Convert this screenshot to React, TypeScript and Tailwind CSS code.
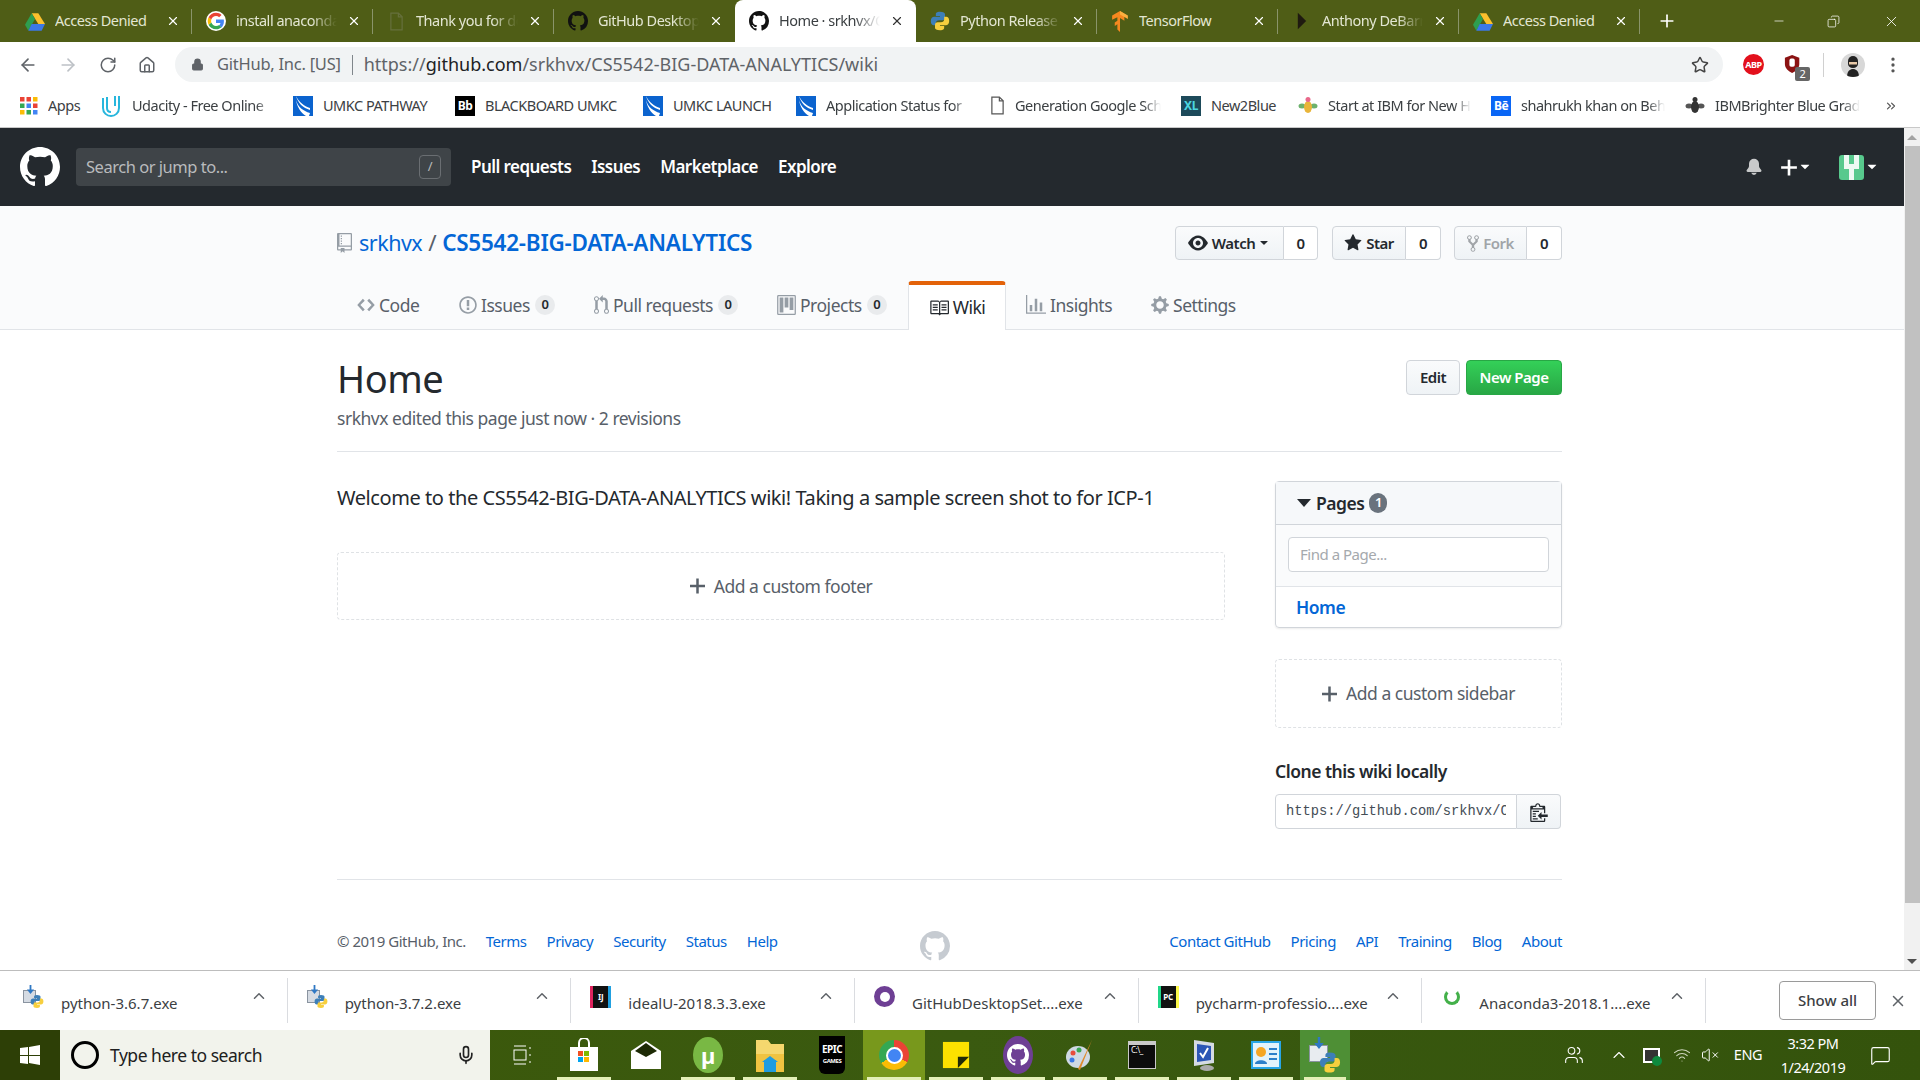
import React from "react";
import { GoStarFill, GoBellFill, GoTriangleDown } from "react-icons/go";
import { ArrowLeft, ArrowRight, RotateCw, Home, Lock, Star, X, Plus, Minus, ChevronUp, Mic, MoreVertical, Copy, MessageSquare, Wifi, VolumeX, Users, ChevronsRight } from "lucide-react";

const O = ({ vb, d, s }: { vb: string; d: string; s: string }) => (
  <svg viewBox={vb} className={`${s} shrink-0`} fill="currentColor" fillRule="evenodd"><path d={d} /></svg>
);
const ghPath = "M8 0C3.58 0 0 3.58 0 8c0 3.54 2.29 6.53 5.47 7.59.4.07.55-.17.55-.38 0-.19-.01-.82-.01-1.49-2.01.37-2.53-.49-2.69-.94-.09-.23-.48-.94-.82-1.13-.28-.15-.68-.52-.01-.53.63-.01 1.08.58 1.23.82.72 1.21 1.87.87 2.33.66.07-.52.28-.87.51-1.07-1.78-.2-3.64-.89-3.64-3.95 0-.87.31-1.59.82-2.15-.08-.2-.36-1.02.08-2.12 0 0 .67-.21 2.2.82.64-.18 1.32-.27 2-.27.68 0 1.36.09 2 .27 1.53-1.04 2.2-.82 2.2-.82.44 1.1.16 1.92.08 2.12.51.56.82 1.27.82 2.15 0 3.07-1.87 3.75-3.65 3.95.29.25.54.73.54 1.48 0 1.07-.01 1.93-.01 2.2 0 .21.15.46.55.38A8.013 8.013 0 0 0 16 8c0-4.42-3.58-8-8-8z";
const Mark = ({ c = "text-white", s = "w-5 h-5" }: { c?: string; s?: string }) => <O vb="0 0 16 16" d={ghPath} s={`${s} ${c}`} />;
const IcRepo = ({ s }: { s: string }) => <O vb="0 0 12 16" s={s} d="M4 9H3V8h1v1zm0-3H3v1h1V6zm0-2H3v1h1V4zm0-2H3v1h1V2zm8-1v12c0 .55-.45 1-1 1H6v2l-1.5-1.5L3 16v-2H1c-.55 0-1-.45-1-1V1c0-.55.45-1 1-1h10c.55 0 1 .45 1 1zm-1 10H1v2h2v-1h3v1h5v-2zm0-10H2v9h9V1z" />;
const IcCode = ({ s }: { s: string }) => <O vb="0 0 14 16" s={s} d="M9.5 3L8 4.5 11.5 8 8 11.5 9.5 13 14 8 9.5 3zm-5 0L0 8l4.5 5L6 11.5 2.5 8 6 4.5 4.5 3z" />;
const IcIssue = ({ s }: { s: string }) => <O vb="0 0 14 16" s={s} d="M7 2.3c3.14 0 5.7 2.56 5.7 5.7s-2.56 5.7-5.7 5.7A5.71 5.71 0 0 1 1.3 8c0-3.14 2.56-5.7 5.7-5.7zM7 1C3.14 1 0 4.14 0 8s3.14 7 7 7 7-3.14 7-7-3.14-7-7-7zm1 3H6v5h2V4zm0 6H6v2h2v-2z" />;
const IcPull = ({ s }: { s: string }) => <O vb="0 0 12 16" s={s} d="M11 11.28V5c-.03-.78-.34-1.47-.94-2.06C9.46 2.35 8.78 2.03 8 2H7V0L4 3l3 3V4h1c.27.02.48.11.69.31.21.2.3.42.31.69v6.28A1.993 1.993 0 0 0 10 15a1.993 1.993 0 0 0 1-3.72zm-1 2.92c-.66 0-1.2-.55-1.2-1.2 0-.65.55-1.2 1.2-1.2.65 0 1.2.55 1.2 1.2 0 .65-.55 1.2-1.2 1.2zM4 3c0-1.11-.89-2-2-2a1.993 1.993 0 0 0-1 3.72v6.56A1.993 1.993 0 0 0 2 15a1.993 1.993 0 0 0 1-3.72V4.72c.59-.34 1-.98 1-1.72zm-.8 10c0 .66-.55 1.2-1.2 1.2-.65 0-1.2-.55-1.2-1.2 0-.65.55-1.2 1.2-1.2.65 0 1.2.55 1.2 1.2zM2 4.2C1.34 4.2.8 3.65.8 3c0-.65.55-1.2 1.2-1.2.65 0 1.2.55 1.2 1.2 0 .65-.55 1.2-1.2 1.2z" />;
const IcProject = ({ s }: { s: string }) => <O vb="0 0 15 16" s={s} d="M10 12h3V2h-3v10zm-4-2h3V2H6v8zm-4 4h3V2H2v12zm-1 1h13V1H1v14zM14 0H1a1 1 0 0 0-1 1v14a1 1 0 0 0 1 1h13a1 1 0 0 0 1-1V1a1 1 0 0 0-1-1z" />;
const IcBook = ({ s }: { s: string }) => <O vb="0 0 16 16" s={s} d="M3 5h4v1H3V5zm0 3h4V7H3v1zm0 2h4V9H3v1zm11-5h-4v1h4V5zm0 2h-4v1h4V7zm0 2h-4v1h4V9zm2-6v9c0 .55-.45 1-1 1H9.5l-1 1-1-1H2c-.55 0-1-.45-1-1V3c0-.55.45-1 1-1h5.5l1 1 1-1H15c.55 0 1 .45 1 1zm-8 .5L7.5 3H2v9h6V3.5zm7-.5H9.5l-.5.5V12h6V3z" />;
const IcGraph = ({ s }: { s: string }) => <O vb="0 0 16 16" s={s} d="M16 14v1H0V0h1v14h15zM5 13H3V8h2v5zm4 0H7V3h2v10zm4 0h-2V6h2v7z" />;
const IcGear = ({ s }: { s: string }) => <O vb="0 0 14 16" s={s} d="M14 8.77v-1.6l-1.94-.64-.45-1.09.88-1.84-1.13-1.13-1.81.91-1.09-.45-.69-1.92h-1.6l-.63 1.94-1.11.45-1.84-.88-1.13 1.13.91 1.81-.45 1.09L0 7.23v1.59l1.94.64.45 1.09-.88 1.84 1.13 1.13 1.81-.91 1.09.45.69 1.92h1.59l.63-1.94 1.11-.45 1.84.88 1.13-1.13-.92-1.81.47-1.09L14 8.75v.02zM7 11c-1.66 0-3-1.34-3-3s1.34-3 3-3 3 1.34 3 3-1.34 3-3 3z" />;
const IcFork = ({ s }: { s: string }) => <O vb="0 0 10 16" s={s} d="M8 1a1.993 1.993 0 0 0-1 3.72V6L5 8 3 6V4.72A1.993 1.993 0 0 0 2 1a1.993 1.993 0 0 0-1 3.72V6.5l3 3v1.78A1.993 1.993 0 0 0 5 15a1.993 1.993 0 0 0 1-3.72V9.5l3-3V4.72A1.993 1.993 0 0 0 8 1zM2 4.2C1.34 4.2.8 3.65.8 3c0-.65.55-1.2 1.2-1.2.65 0 1.2.55 1.2 1.2 0 .65-.55 1.2-1.2 1.2zm3 10c-.66 0-1.2-.55-1.2-1.2 0-.65.55-1.2 1.2-1.2.65 0 1.2.55 1.2 1.2 0 .65-.55 1.2-1.2 1.2zm3-10c-.66 0-1.2-.55-1.2-1.2 0-.65.55-1.2 1.2-1.2.65 0 1.2.55 1.2 1.2 0 .65-.55 1.2-1.2 1.2z" />;
const IcEye = ({ s }: { s: string }) => <O vb="0 0 16 16" s={s} d="M8.06 2C3 2 0 8 0 8s3 6 8.06 6C13 14 16 8 16 8s-3-6-7.94-6zM8 12c-2.2 0-4-1.78-4-4 0-2.2 1.8-4 4-4 2.22 0 4 1.8 4 4 0 2.22-1.78 4-4 4zm2-4c0 1.11-.89 2-2 2-1.11 0-2-.89-2-2 0-1.11.89-2 2-2 1.11 0 2 .89 2 2z" />;
const IcClip = ({ s }: { s: string }) => <O vb="0 0 14 16" s={s} d="M2 13h4v1H2v-1zm5-6H2v1h5V7zm2 3V8l-3 3 3 3v-2h5v-2H9zM4.5 9H2v1h2.5V9zM2 12h2.5v-1H2v1zm9 1h1v2c-.02.28-.11.52-.3.7-.19.18-.42.28-.7.3H1c-.55 0-1-.45-1-1V4c0-.55.45-1 1-1h3c0-1.11.89-2 2-2 1.11 0 2 .89 2 2h3c.55 0 1 .45 1 1v5h-1V6H1v9h10v-2zM2 5h8c0-.55-.45-1-1-1H8c-.55 0-1-.45-1-1s-.45-1-1-1-1 .45-1 1-.45 1-1 1H3c-.55 0-1 .45-1 1z" />;
const IcPlus = ({ s }: { s: string }) => <O vb="0 0 12 16" s={s} d="M12 9H7v5H5V9H0V7h5V2h2v5h5v2z" />;

const Drive = () => (
  <svg viewBox="0 0 24 22" className="w-5 h-[19px] shrink-0">
    <path d="M8 1h8l8 13h-8z" fill="#fbc02d" />
    <path d="M8 1L0 15l4 7 8-14z" fill="#2e9e4f" />
    <path d="M4 22h16l4-8H8z" fill="#3b78e7" />
  </svg>
);
const Google = () => (
  <svg viewBox="0 0 48 48" className="w-5 h-5 shrink-0">
    <circle cx="24" cy="24" r="24" fill="#fff" />
    <path d="M43 24.5c0-1.4-.1-2.7-.4-4H24v8h10.8c-.5 2.5-1.9 4.6-4 6l6.4 5c3.7-3.5 5.8-8.6 5.8-15z" fill="#4285f4" />
    <path d="M24 44c5.4 0 9.9-1.8 13.2-4.9l-6.4-5c-1.8 1.2-4 1.9-6.8 1.9-5.2 0-9.6-3.5-11.2-8.2l-6.6 5.1C9.5 39.5 16.2 44 24 44z" fill="#34a853" />
    <path d="M12.8 27.8c-.8-2.4-.8-5.1 0-7.6l-6.6-5.1c-2.8 5.6-2.8 12.2 0 17.8z" fill="#fbbc05" />
    <path d="M24 12c2.9 0 5.6 1 7.6 3l5.7-5.7C33.9 6 29.4 4 24 4 16.2 4 9.5 8.5 6.2 15.1l6.6 5.1C14.4 15.5 18.8 12 24 12z" fill="#ea4335" />
  </svg>
);
const Doc = ({ c = "#66703c" }: { c?: string }) => (
  <svg viewBox="0 0 16 20" className="w-[15px] h-[19px] shrink-0" fill="none" stroke={c} strokeWidth="1.3">
    <path d="M2 1h8l4 4v14H2z" /><path d="M10 1v4h4" />
  </svg>
);
const Py = ({ s = "w-5 h-5" }: { s?: string }) => (
  <svg viewBox="0 0 24 24" className={`${s} shrink-0`}>
    <path d="M12 1c-4 0-5 1.5-5 3v2h5v1H5c-2 0-4 1.5-4 5s1.5 5 3.5 5H7v-2.5C7 12.5 8.5 11 11 11h4c1.5 0 3-1 3-3V4c0-1.5-2-3-6-3z" fill="#3d7fb8" />
    <path d="M12 23c4 0 5-1.5 5-3v-2h-5v-1h7c2 0 4-1.5 4-5s-1.5-5-3.5-5H17v2.5c0 2.5-1.5 4-4 4H9c-1.5 0-3 1-3 3v4c0 1.5 2 2.5 6 2.5z" fill="#f7cf3e" />
  </svg>
);
const DlPy = () => (
  <span className="relative block w-[21px] h-[24px]">
    <span className="absolute left-0 top-[5px] w-[13px] h-[13px] bg-[#d5dbe3] border border-[#8a94a0]" />
    <svg viewBox="0 0 10 10" className="absolute left-[3px] top-0 w-[9px] h-[9px]"><path d="M4 0h2v5h3L5 10 1 5h3z" fill="#2f78c4" /></svg>
    <span className="absolute left-[7px] top-[9px]"><Py s="w-[14px] h-[15px]" /></span>
  </span>
);
const BarPy = () => (
  <span className="relative block w-[32px] h-[38px]">
    <span className="absolute left-0 top-[9px] w-[19px] h-[17px] bg-[#e8ecf0] border border-[#8a94a0]" />
    <svg viewBox="0 0 10 10" className="absolute left-[4px] top-0 w-[12px] h-[14px]"><path d="M4 0h2v5h3L5 10 1 5h3z" fill="#2f78c4" /></svg>
    <span className="absolute left-[10px] top-[15px]"><Py s="w-[22px] h-[23px]" /></span>
  </span>
);
const Tf = () => (
  <svg viewBox="0 0 20 24" className="w-[18px] h-[21px] shrink-0">
    <path d="M10 0L1 5v5l6-3v4l-3 2v4l3-2v6l3 3V8l5 3V6l3 1V5z" fill="#f6881f" />
    <path d="M10 0l9 5v4l-9-5z" fill="#fbb040" />
  </svg>
);
const Dark = () => <svg viewBox="0 0 12 20" className="w-[10px] h-[20px] ml-[5px] mr-[5px] shrink-0"><path d="M1 0l10 10-10 10z" fill="#1f1a10" /></svg>;

const tabs = [
  { t: "Access Denied", i: <Drive /> },
  { t: "install anaconda", i: <Google />, f: true },
  { t: "Thank you for downloading", i: <span className="px-[2px] flex"><Doc /></span>, f: true },
  { t: "GitHub Desktop", i: <Mark c="text-[#111]" />, f: true },
  { t: "Home · srkhvx/CS5542", i: <Mark c="text-[#111]" />, a: true, f: true },
  { t: "Python Release", i: <Py />, f: true },
  { t: "TensorFlow", i: <Tf /> },
  { t: "Anthony DeBarros", i: <Dark />, f: true },
  { t: "Access Denied", i: <Drive /> },
];

const UmkcIcon = () => (
  <svg viewBox="0 0 20 20" className="w-5 h-5 shrink-0">
    <rect width="20" height="20" fill="#0b63ce" />
    <path d="M3 4c2 7 7 11 14 13l-1 3H13C8 17 4 11 3 4zM3 0c3 6 8 10 14 12v2C10 12 5 7 3 0z" fill="#fff" />
  </svg>
);
const Bee = ({ c = false }: { c?: boolean }) => (
  <svg viewBox="0 0 20 20" className="w-5 h-5 shrink-0">
    <ellipse cx="4" cy="10" rx="3.5" ry="2.5" fill={c ? "#6db26d" : "#555"} />
    <ellipse cx="16" cy="10" rx="3.5" ry="2.5" fill={c ? "#6db26d" : "#555"} />
    <ellipse cx="10" cy="11" rx="4" ry="6" fill={c ? "#e9b53a" : "#333"} />
    <circle cx="10" cy="3.5" r="2.5" fill={c ? "#e9688a" : "#333"} />
  </svg>
);

const bookmarks = [
  { i: <svg viewBox="0 0 18 18" className="w-[18px] h-[18px] shrink-0">{[0, 6.5, 13].flatMap((y, r) => [0, 6.5, 13].map((x, k) => <rect key={`${r}${k}`} x={x} y={y} width="4.5" height="4.5" fill={[["#ea4335", "#ea4335", "#fbbc05"], ["#34a853", "#4285f4", "#ea4335"], ["#fbbc05", "#34a853", "#4285f4"]][r][k]} />))}</svg>, t: "Apps", w: "w-[34px] mr-[-2px]" },
  { i: <svg viewBox="0 0 20 22" className="w-[22px] h-[22px] shrink-0" fill="none" stroke="#27b6dd" strokeWidth="2"><path d="M2 3v10c0 5 4 8 8 8s8-3 8-8V1M6 2v11c0 3 2 4 4 4M14 1v10" /></svg>, t: "Udacity - Free Online", w: "w-[141px]", f: true },
  { i: <UmkcIcon />, t: "UMKC PATHWAY", w: "w-[112px]" },
  { i: <span className="w-5 h-5 bg-black text-white text-[12px] font-bold flex items-center justify-center shrink-0">Bb</span>, t: "BLACKBOARD UMKC", w: "w-[138px]" },
  { i: <UmkcIcon />, t: "UMKC LAUNCH", w: "w-[103px]" },
  { i: <UmkcIcon />, t: "Application Status for", w: "w-[144px]", f: true },
  { i: <Doc c="#555" />, t: "Generation Google Scholarship", w: "w-[146px]", f: true },
  { i: <span className="w-5 h-5 bg-[#1d4a5a] text-[#4cd6e0] text-[12px] font-bold flex items-center justify-center shrink-0">XL</span>, t: "New2Blue", w: "w-[67px]" },
  { i: <Bee c />, t: "Start at IBM for New Hires", w: "w-[143px]", f: true },
  { i: <span className="w-5 h-5 bg-[#0a66f5] text-white text-[12px] font-bold flex items-center justify-center shrink-0">Bē</span>, t: "shahrukh khan on Behance", w: "w-[144px]", f: true },
  { i: <Bee />, t: "IBMBrighter Blue Grad", w: "w-[145px]", f: true },
];

const Chrome = () => (
  <div className="flex flex-col shrink-0">
    <div className="h-[42px] bg-[#4f5d16] flex items-stretch pl-[11px]">
      {tabs.map((t, i) => {
        const nextActive = tabs[i + 1]?.a;
        return (
          <div key={i} className={`w-[181px] shrink-0 flex items-center pl-[14px] pr-[12px] gap-[10px] text-[14.5px] relative ${t.a ? "bg-white text-[#3c4043] rounded-t-[8px]" : "text-[#e3e6d2]"}`}>
            {t.i}
            <span className={`flex-1 overflow-hidden whitespace-nowrap ${t.f ? "[mask-image:linear-gradient(to_right,black_75%,transparent)]" : ""}`}>{t.t}</span>
            <X className={`w-[14px] h-[14px] shrink-0 ${t.a ? "text-[#333]" : "text-white"}`} />
            {!t.a && !nextActive && <span className="absolute right-0 top-[9px] h-[25px] w-px bg-[#8a946a]" />}
          </div>
        );
      })}
      <Plus className="w-[20px] h-[20px] text-white self-center ml-[17px]" />
      <div className="ml-auto flex items-center text-white">
        <Minus className="w-[14px] h-[14px] mr-[41px]" strokeWidth={1.2} />
        <Copy className="w-[13px] h-[15px] mr-[43px] -scale-x-100" strokeWidth={1.4} />
        <X className="w-[17px] h-[17px] mr-[20px]" strokeWidth={1.2} />
      </div>
    </div>
    <div className="h-[43px] bg-white flex items-center pl-[18px] pr-[2px] pt-[2px]">
      <ArrowLeft className="w-5 h-5 text-[#5f6368]" />
      <ArrowRight className="w-5 h-5 text-[#bdc1c6] ml-[20px]" />
      <RotateCw className="w-[18px] h-[18px] text-[#5f6368] ml-[21px]" />
      <Home className="w-[18px] h-[18px] text-[#5f6368] ml-[21px]" />
      <div className="ml-[19px] w-[1548px] h-[35px] rounded-full bg-[#f1f3f4] flex items-center pl-[16px] pr-[14px] text-[16.5px] text-[#5f6368] whitespace-nowrap tracking-[-0.25px]">
        <Lock className="w-[13px] h-[13px] fill-[#5f6368] mr-[13px]" />
        <span>GitHub, Inc. [US]</span>
        <span className="w-px h-[20px] bg-[#80868b] mx-[11px]" />
        <span className="text-[18px] tracking-normal">https://<span className="text-[#202124]">github.com</span>/srkhvx/CS5542-BIG-DATA-ANALYTICS/wiki</span>
        <Star className="w-[18px] h-[18px] ml-auto text-[#444]" />
      </div>
      <div className="ml-[20px] w-[21px] h-[21px] rounded-full bg-[#e3101c] text-white text-[9px] font-bold flex items-center justify-center">ABP</div>
      <div className="ml-[20px] relative w-[20px] h-[22px]">
        <svg viewBox="0 0 20 22" className="w-[18px] h-[20px]"><path d="M9 1l8 3v7c0 5-4 8-8 10-4-2-8-5-8-10V4z" fill="#8b1212" /><rect x="6" y="5" width="6" height="9" rx="2" fill="#fff" /></svg>
        <span className="absolute left-[11px] top-[13px] w-[15px] h-[14px] bg-[#666] rounded-[2px] text-white text-[11px] leading-[14px] text-center">2</span>
      </div>
      <span className="ml-[19px] w-px h-[24px] bg-[#d0d0d0]" />
      <div className="ml-[17px] w-[24px] h-[24px] rounded-full bg-[#d8d8d8] flex items-center justify-center overflow-hidden">
        <svg viewBox="0 0 24 24" className="w-[24px] h-[24px]"><path d="M7 8a5 5 0 0 1 10 0v3c0 2-2 4-5 4s-5-2-5-4z" fill="#222" /><rect x="8" y="9" width="8" height="2.5" fill="#e8c9a8" /><path d="M6 24c0-6 3-8 6-8s6 2 6 8z" fill="#222" /></svg>
      </div>
      <MoreVertical className="ml-[18px] w-[20px] h-[20px] text-[#555]" />
    </div>
    <div className="h-[42px] bg-white border-b border-[#c8c8c8] box-content flex items-center pl-[20px] text-[14.5px] text-[#3c4043] whitespace-nowrap">
      <div className="flex items-center gap-[20px] -mt-[1px]">
        {bookmarks.map((b, i) => (
          <div key={i} className="flex items-center gap-[10px]">
            {b.i}
            <span className={`${b.w} overflow-hidden ${b.f ? "[mask-image:linear-gradient(to_right,black_88%,transparent)]" : ""}`}>{b.t}</span>
          </div>
        ))}
      </div>
      <ChevronsRight className="w-[14px] h-[14px] ml-[24px] text-[#555]" />
    </div>
  </div>
);

const Header = () => (
  <div className="h-[78px] bg-[#24292e] flex items-center pl-[20px] pr-[24px] text-white shrink-0">
    <Mark s="w-[40px] h-[40px]" />
    <div className="ml-[16px] w-[375px] h-[38px] bg-[#3f4448] rounded-[4px] flex items-center px-[10px] text-[#b9bbbd] text-[16.5px]">
      <span className="flex-1">Search or jump to...</span>
      <span className="w-[22px] h-[24px] border border-[#6a6e72] rounded-[4px] flex items-center justify-center text-[13px]">/</span>
    </div>
    <nav className="ml-[20px] flex gap-[20px] font-semibold text-[17px] tracking-[-0.55px]">
      <span>Pull requests</span><span>Issues</span><span>Marketplace</span><span>Explore</span>
    </nav>
    <div className="ml-auto flex items-center">
      <GoBellFill className="w-[20px] h-[20px] text-[#c8c9ca]" />
      <IcPlus s="ml-[17px] w-[16px] h-[21px]" />
      <GoTriangleDown className="w-[16px] h-[16px]" />
      <div className="ml-[26px] w-[25px] h-[25px] rounded-[3px] bg-[#58c98d] relative overflow-hidden">
        <span className="absolute left-[5px] top-0 w-[5px] h-[14px] bg-[#eef9f3]" />
        <span className="absolute left-[15px] top-0 w-[5px] h-[14px] bg-[#eef9f3]" />
        <span className="absolute left-[10px] top-[9px] w-[5px] h-[16px] bg-[#eef9f3]" />
      </div>
      <GoTriangleDown className="w-[16px] h-[16px]" />
    </div>
  </div>
);

const Social = ({ icon, label, btn, sep, off }: { icon: React.ReactNode; label: React.ReactNode; btn: string; sep: string; off?: boolean }) => (
  <div className={`flex h-[34px] text-[15px] ${sep}`}>
    <div className={`${btn} flex items-center justify-center gap-[4px] border border-[#d1d5da] rounded-l-[4px] bg-gradient-to-b from-[#fafbfc] to-[#eff3f6] font-semibold ${off ? "text-[#a0a4a8]" : "text-[#24292e]"}`}>
      {icon}{label}
    </div>
    <div className="flex-1 flex items-center justify-center border border-l-0 border-[#d1d5da] rounded-r-[4px] bg-white font-semibold text-[#24292e]">0</div>
  </div>
);

const RepoTab = ({ icon, label, count, cls }: { icon: React.ReactNode; label: string; count?: boolean; cls: string }) => (
  <div className={`${cls} flex items-center h-[48px] pl-[20px] gap-[4px] text-[17.5px] text-[#586069] whitespace-nowrap`}>
    {icon}<span>{label}</span>
    {count && <span className="ml-[1px] w-[20px] h-[20px] rounded-full bg-[#e9ebed] text-[#24292e] text-[13px] font-semibold flex items-center justify-center">0</span>}
  </div>
);

const RepoHead = () => (
  <div className="bg-[#fafbfc] border-b border-[#e1e4e8] h-[124px] pt-[20px] shrink-0">
    <div className="ml-[337px] w-[1225px]">
      <div className="flex items-center h-[34px]">
        <IcRepo s="w-[15px] h-[20px] text-[#959da5] mr-[7px]" />
        <span className="text-[21.5px] text-[#0366d6] tracking-[-0.5px]">srkhvx</span>
        <span className="text-[22.5px] text-[#586069] mx-[6px]">/</span>
        <span className="text-[22.5px] text-[#0366d6] font-semibold tracking-[-0.25px]">CS5542-BIG-DATA-ANALYTICS</span>
        <div className="ml-auto flex items-center">
          <Social sep="w-[143px] mr-[14px]" btn="w-[109px]" icon={<IcEye s="w-[20px] h-[20px]" />} label={<>Watch<GoTriangleDown className="w-[14px] h-[14px] -ml-[2px]" /></>} />
          <Social sep="w-[109px] mr-[13px]" btn="w-[74px]" icon={<GoStarFill className="w-[18px] h-[18px]" />} label="Star" />
          <Social off sep="w-[108px]" btn="w-[73px]" icon={<IcFork s="w-[12px] h-[19px]" />} label="Fork" />
        </div>
      </div>
      <div className="flex mt-[21px] h-[49px]">
        <RepoTab cls="w-[102px]" icon={<IcCode s="w-[18px] h-[20px] text-[#959da5]" />} label="Code" />
        <RepoTab cls="w-[135px]" icon={<IcIssue s="w-[18px] h-[20px] text-[#959da5]" />} label="Issues" count />
        <RepoTab cls="w-[183px]" icon={<IcPull s="w-[15px] h-[20px] text-[#959da5]" />} label="Pull requests" count />
        <RepoTab cls="w-[151px]" icon={<IcProject s="w-[19px] h-[20px] text-[#959da5]" />} label="Projects" count />
        <div className="w-[98px] h-[49px] bg-white border border-b-0 border-x-[#e1e4e8] border-t-[4px] border-t-[#e36209] rounded-t-[4px] flex items-center justify-center gap-[4px] text-[17.5px] text-[#24292e]">
          <IcBook s="w-[20px] h-[20px]" /><span>Wiki</span>
        </div>
        <RepoTab cls="w-[125px]" icon={<IcGraph s="w-[20px] h-[20px] text-[#959da5]" />} label="Insights" />
        <RepoTab cls="w-[130px]" icon={<IcGear s="w-[18px] h-[20px] text-[#959da5]" />} label="Settings" />
      </div>
    </div>
  </div>
);

const AddBox = ({ label, cls }: { label: string; cls: string }) => (
  <div className={`${cls} border border-dashed border-[#dfe2e5] rounded-[4px] flex items-center justify-center gap-[9px] text-[17.5px] text-[#586069]`}>
    <IcPlus s="w-[15px] h-[20px]" />{label}
  </div>
);

const Body = () => (
  <div className="ml-[337px] w-[1225px] flex-1 flex flex-col">
    <div className="h-[122px] border-b border-[#e1e4e8] shrink-0 pt-[27px] flex items-start">
      <div>
        <h1 className="text-[38px] leading-[42px] text-[#24292e]">Home</h1>
        <p className="text-[17.5px] leading-[24px] text-[#586069] mt-[7px]">srkhvx edited this page just now · 2 revisions</p>
      </div>
      <div className="ml-auto flex gap-[6px] text-[15px] font-semibold mt-[3px]">
        <div className="w-[54px] h-[35px] border border-[#d1d5da] rounded-[4px] bg-gradient-to-b from-[#fafbfc] to-[#eff3f6] text-[#24292e] flex items-center justify-center">Edit</div>
        <div className="w-[96px] h-[35px] border border-[#28a745] rounded-[4px] bg-gradient-to-b from-[#34d058] to-[#28a745] text-white flex items-center justify-center">New Page</div>
      </div>
    </div>
    <div className="flex-1 flex">
      <div className="w-[888px] pt-[31px]">
        <p className="text-[20px] leading-[30px] text-[#24292e] tracking-[-0.022em]">Welcome to the CS5542-BIG-DATA-ANALYTICS wiki! Taking a sample screen shot to for ICP-1</p>
        <AddBox cls="mt-[39px] h-[68px]" label="Add a custom footer" />
      </div>
      <div className="w-[287px] ml-[50px] pt-[29px]">
        <div className="border border-[#d1d5da] rounded-[4px] h-[147px] flex flex-col shadow-[0_1px_2px_rgba(0,0,0,0.08)]">
          <div className="h-[43px] bg-[#f6f8fa] border-b border-[#d1d5da] flex items-center pl-[21px] text-[17.5px] font-semibold text-[#24292e]">
            <span className="w-0 h-0 border-x-[7px] border-x-transparent border-t-[8px] border-t-[#24292e] mr-[5px]" />
            <span>Pages</span>
            <span className="ml-[5px] w-[18px] h-[20px] rounded-full bg-[#6a737d] text-white text-[13px] flex items-center justify-center">1</span>
          </div>
          <div className="h-[62px] bg-[#fafbfc] border-b border-[#e1e4e8] px-[12px] pt-[12px]">
            <div className="w-[261px] h-[35px] border border-[#d1d5da] rounded-[4px] bg-white flex items-center pl-[11px] text-[15px] text-[#a5a9ad]">Find a Page...</div>
          </div>
          <div className="flex-1 flex items-center pl-[20px] text-[17.5px] font-semibold text-[#0366d6]">Home</div>
        </div>
        <AddBox cls="mt-[31px] h-[69px]" label="Add a custom sidebar" />
        <h3 className="mt-[31px] text-[17.5px] leading-[24px] font-semibold text-[#24292e]">Clone this wiki locally</h3>
        <div className="mt-[11px] w-[286px] h-[35px] flex">
          <div className="w-[242px] border border-[#d1d5da] rounded-l-[4px] bg-white flex items-center pl-[10px] pr-[10px] overflow-hidden font-['Liberation_Mono',monospace] text-[13.75px] tracking-normal text-[#444d56] whitespace-nowrap">
            <span className="overflow-hidden pt-[2px]">https://github.com/srkhvx/CS5542</span>
          </div>
          <div className="flex-1 border border-l-0 border-[#d1d5da] rounded-r-[4px] bg-gradient-to-b from-[#fafbfc] to-[#eff3f6] flex items-center justify-center"><IcClip s="w-[18px] h-[20px] text-[#24292e]" /></div>
        </div>
      </div>
    </div>
    <div className="h-[91px] border-t border-[#e1e4e8] shrink-0 flex items-start pt-[51px] text-[15px] leading-[20px] text-[#0366d6]">
      <div className="flex gap-[20px]"><span className="text-[#586069]">© 2019 GitHub, Inc.</span><span>Terms</span><span>Privacy</span><span>Security</span><span>Status</span><span>Help</span></div>
      <Mark c="text-[#c6cbd1]" s="w-[30px] h-[30px] ml-[142px]" />
      <div className="ml-auto flex gap-[20px]"><span>Contact GitHub</span><span>Pricing</span><span>API</span><span>Training</span><span>Blog</span><span>About</span></div>
    </div>
  </div>
);

const Scrollbar = () => (
  <div className="w-[16px] bg-[#f1f1f1] flex flex-col shrink-0">
    <div className="h-[18px] flex items-center justify-center"><span className="w-0 h-0 border-x-[5px] border-x-transparent border-b-[5px] border-b-[#a3a3a3]" /></div>
    <div className="ml-[1px] h-[757px] bg-[#c1c1c1]" />
    <div className="mt-auto h-[18px] flex items-center justify-center"><span className="w-0 h-0 border-x-[5px] border-x-transparent border-t-[5px] border-t-[#505050]" /></div>
  </div>
);

const Downloads = () => {
  const items = [
    { t: "python-3.6.7.exe", i: <DlPy /> },
    { t: "python-3.7.2.exe", i: <DlPy /> },
    { t: "idealU-2018.3.3.exe", i: <span className="w-[21px] h-[22px] bg-[#111] border-l-[3px] border-l-[#e0245e] border-r-[3px] border-r-[#21a0e0] text-white text-[8px] font-bold flex items-center justify-center">IJ</span> },
    { t: "GitHubDesktopSet....exe", i: <span className="w-[21px] h-[21px] rounded-full bg-[#6e3f94] flex items-center justify-center"><span className="w-[10px] h-[10px] rounded-full bg-white" /></span> },
    { t: "pycharm-professio....exe", i: <span className="w-[21px] h-[22px] bg-[#111] border-l-[3px] border-l-[#21d789] border-r-[3px] border-r-[#fcf84a] text-white text-[8px] font-bold flex items-center justify-center">PC</span> },
    { t: "Anaconda3-2018.1....exe", i: <span className="block w-[16px] h-[16px] ml-[3px] mr-[2px] rounded-full border-[3px] border-[#43b049] border-t-transparent" /> },
  ];
  return (
    <div className="h-[60px] bg-white border-t border-[#bdbdbd] flex items-center shrink-0 text-[15px] tracking-normal text-[#3c4043] whitespace-nowrap box-border">
      <div className="flex w-[1706px] h-[45px]">
        {items.map((d, i) => (
          <div key={i} className="w-[284px] first:w-[288px] border-r border-[#dadce0] flex items-center relative first:pl-[23px] pl-[19px]">
            <span className="block -mt-[8px] shrink-0">{d.i}</span>
            <span className="ml-[17px] mt-[6px]">{d.t}</span>
            <ChevronUp className="absolute right-[19px] top-[9px] w-[18px] h-[18px] text-[#5f6368]" />
          </div>
        ))}
      </div>
      <div className="ml-[73px] w-[97px] h-[39px] border border-[#9a9a9a] rounded-[4px] flex items-center justify-center text-[15px] font-medium">Show all</div>
      <X className="ml-[13px] w-[18px] h-[18px] text-[#5f6368]" />
    </div>
  );
};

const TB = ({ children, cls = "", on, hi }: { children: React.ReactNode; cls?: string; on?: boolean; hi?: boolean }) => (
  <div className={`w-[62px] h-[50px] shrink-0 flex items-center justify-center relative ${hi ? "bg-[#78981c]" : ""} ${cls}`}>
    {children}
    {on && <span className="absolute bottom-0 left-[4px] right-[4px] h-[3px] bg-[#e4f0b8]" />}
  </div>
);

const Taskbar = () => (
  <div className="h-[50px] bg-gradient-to-r from-[#3c5708] via-[#3a5a10] to-[#34530c] flex items-stretch text-white shrink-0">
    <div className="w-[60px] bg-[#2d3f06] flex items-center justify-center">
      <svg viewBox="0 0 20 20" className="w-[20px] h-[20px]" fill="#fff"><path d="M0 3l8-1v8H0zM9 2l11-2v10H9zM0 11h8v8l-8-1zM9 11h11v9L9 18z" /></svg>
    </div>
    <div className="w-[430px] bg-[#f2f3ec] flex items-center pl-[11px] pr-[14px] text-[#202020] text-[17.5px]">
      <span className="w-[28px] h-[28px] rounded-full border-[3px] border-black mr-[11px]" />
      <span className="flex-1">Type here to search</span>
      <Mic className="w-[20px] h-[22px] text-[#222]" />
    </div>
    <div className="flex ml-[1px]">
      <TB><svg viewBox="0 0 20 20" className="w-[20px] h-[20px]" fill="none" stroke="#fff" strokeWidth="1"><path d="M2 1h12M2 19h12" /><rect x="2" y="5" width="12" height="10" /><path d="M18 2v2M18 9v2M18 16v2" /></svg></TB>
      <TB on><svg viewBox="0 0 30 34" className="w-[30px] h-[34px]"><path d="M1 9h28v24H1z" fill="#fff" /><path d="M10 9V5a5 5 0 0 1 10 0v4" fill="none" stroke="#fff" strokeWidth="2" /><rect x="9" y="13" width="5" height="5" fill="#f25022" /><rect x="15" y="13" width="5" height="5" fill="#7fba00" /><rect x="9" y="19" width="5" height="5" fill="#00a4ef" /><rect x="15" y="19" width="5" height="5" fill="#ffb900" /></svg></TB>
      <TB><svg viewBox="0 0 30 28" className="w-[30px] h-[28px]"><path d="M0 10L15 0l15 10v18H0z" fill="#fff" /><path d="M4 10L15 2l11 8-11 6z" fill="#1d2a05" /></svg></TB>
      <TB on><span className="w-[30px] h-[36px] rounded-[50%] bg-[#79b844] text-white text-[22px] font-bold flex items-center justify-center">µ</span></TB>
      <TB on><svg viewBox="0 0 28 34" className="w-[28px] h-[34px]"><path d="M0 2h12l3 4h13v28H0z" fill="#f5d76e" /><rect y="16" width="28" height="18" fill="#f0c341" /><rect x="8" y="22" width="12" height="12" fill="#1f9ce0" /><path d="M6 24l8-6 8 6z" fill="#1f9ce0" /></svg></TB>
      <TB><span className="w-[26px] h-[38px] bg-black text-white text-[10px] font-bold leading-[10px] flex flex-col items-center justify-center rounded-b-[6px]"><span>EPIC</span><span className="text-[6px] mt-[2px]">GAMES</span></span></TB>
      <TB on hi><span className="w-[30px] h-[30px] rounded-full bg-[conic-gradient(#ea4335_0_33%,#fbbc05_33%_66%,#34a853_66%_100%)] flex items-center justify-center"><span className="w-[13px] h-[13px] rounded-full bg-[#4285f4] border-2 border-white box-content" /></span></TB>
      <TB on><svg viewBox="0 0 30 30" className="w-[28px] h-[28px]"><path d="M1 1h28v28H1z" fill="#fce100" /><path d="M17 29l12-12H17z" fill="#1f2a06" /></svg></TB>
      <TB on><span className="w-[30px] h-[38px] rounded-[50%] bg-[#6e3f94] flex items-center justify-center"><Mark s="w-[22px] h-[22px]" /></span></TB>
      <TB on><svg viewBox="0 0 30 34" className="w-[30px] h-[34px]"><ellipse cx="13" cy="19" rx="12" ry="11" fill="#cfd9e4" /><circle cx="8" cy="15" r="2.5" fill="#e74c3c" /><circle cx="14" cy="12" r="2.5" fill="#3aa655" /><circle cx="7" cy="22" r="2.5" fill="#3b78e7" /><path d="M27 2L15 32l-2-1z" fill="#e08a2c" /></svg></TB>
      <TB on><span className="w-[28px] h-[28px] bg-[#0c0c0c] border-t-[4px] border-[#c9c9c9] border-x border-b text-white text-[8px] leading-[10px] pl-[2px]">C:\_</span></TB>
      <TB on><svg viewBox="0 0 30 34" className="w-[30px] h-[34px]"><path d="M5 2l20 3v20l-20 3z" fill="#d5dbe3" /><path d="M8 6l14 2v14l-14 2z" fill="#2b56b5" /><path d="M11 15l3 4 5-9" stroke="#fff" strokeWidth="2" fill="none" /><ellipse cx="18" cy="30" rx="7" ry="3" fill="#aaa" /></svg></TB>
      <TB on><svg viewBox="0 0 30 28" className="w-[30px] h-[28px]"><rect width="30" height="28" fill="#29a6e6" /><rect x="2" y="2" width="26" height="24" fill="#e2f3fb" /><circle cx="10" cy="11" r="5" fill="#f5a623" /><path d="M4 23c0-5 12-5 12 0z" fill="#2b7fc9" /><path d="M18 8h8M18 13h8M18 18h8" stroke="#2b7fc9" strokeWidth="2" /></svg></TB>
      <TB on hi cls="!bg-[#4e8f35] !w-[50px] ml-[3px]"><BarPy /></TB>
    </div>
    <div className="ml-auto flex items-center">
      <Users className="w-[20px] h-[20px]" strokeWidth={1.3} />
      <ChevronUp className="w-[20px] h-[20px] ml-[25px]" strokeWidth={1.3} />
      <span className="ml-[14px] w-[17px] h-[15px] border-[2px] border-white bg-[#333] relative"><span className="absolute -right-[4px] -bottom-[5px] w-[10px] h-[10px] rounded-full bg-[#0e8a3e]" /></span>
      <Wifi className="w-[18px] h-[18px] ml-[13px] text-[#cfd6bf]" strokeWidth={1.4} />
      <VolumeX className="w-[18px] h-[18px] ml-[10px]" strokeWidth={1.3} />
      <span className="ml-[15px] text-[14.5px]">ENG</span>
      <div className="ml-[11px] w-[80px] text-center text-[14.5px] leading-[24px]"><div>3:32 PM</div><div>1/24/2019</div></div>
      <MessageSquare className="w-[21px] h-[21px] ml-[17px] mr-[29px]" strokeWidth={1.3} />
    </div>
  </div>
);

export default function App() {
  return (
    <div className="w-[1920px] h-[1080px] flex flex-col overflow-hidden bg-white font-['Noto_Sans',sans-serif] tracking-[-0.03em]">
      <Chrome />
      <div className="flex flex-1 min-h-0">
        <div className="flex-1 flex flex-col min-w-0">
          <Header />
          <RepoHead />
          <Body />
        </div>
        <Scrollbar />
      </div>
      <Downloads />
      <Taskbar />
    </div>
  );
}
